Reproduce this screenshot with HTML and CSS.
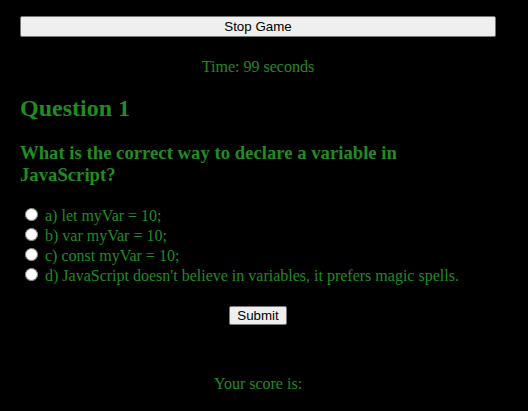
FILE: index.html
```html
<!DOCTYPE html>
<html>
<head>
<meta charset="utf-8">
<link rel="stylesheet" href="styles.css">
</head>
<body>
<div class="game">
  <button class="stop-btn">Stop Game</button>
  <p class="timer">Time: 99 seconds</p>
  <h2 class="q-num">Question 1</h2>
  <h3 class="q-text">What is the correct way to declare a variable in JavaScript?</h3>
  <div class="options">
    <label class="option"><input type="radio" name="ans"> a) let myVar = 10;</label>
    <label class="option"><input type="radio" name="ans"> b) var myVar = 10;</label>
    <label class="option"><input type="radio" name="ans"> c) const myVar = 10;</label>
    <label class="option"><input type="radio" name="ans"> d) JavaScript doesn't believe in variables, it prefers magic spells.</label>
  </div>
  <div class="submit-row"><button class="submit-btn">Submit</button></div>
  <p class="score">Your score is:</p>
</div>
</body>
</html>
```
FILE: styles.css
```css
html, body {
  background: #000;
}
body {
  margin: 0;
  padding: 16px 20px;
  font-family: "Liberation Serif", serif;
  color: #228b22;
}
.game {
  width: 476px;
}
.stop-btn {
  display: block;
  width: 476px;
  height: 21px;
  font-family: "Liberation Sans", Arial, sans-serif;
  font-size: 13.33px;
  background: #efefef;
  border: 1px solid #767676;
  border-radius: 2px;
  color: #000;
  padding: 1px 6px;
}
.timer {
  text-align: center;
  font-size: 16px;
  margin: 21px 0 19px;
}
.q-num {
  font-size: 24px;
  margin: 19px 0 20px;
}
.q-text {
  font-size: 18.72px;
  margin: 18.72px 0;
}
.options {
  display: flex;
  flex-direction: column;
}
.option {
  display: block;
  height: 20px;
  font-size: 16px;
  line-height: 20px;
}
.option input {
  margin: 3px 3px 0 5px;
}
.submit-row {
  text-align: center;
  margin-top: 21px;
}
.submit-btn {
  font-family: "Liberation Sans", Arial, sans-serif;
  font-size: 13.33px;
  background: #efefef;
  border: 1px solid #767676;
  border-radius: 2px;
  color: #000;
  padding: 1px 7px;
}
.score {
  text-align: center;
  font-size: 16px;
  margin-top: 50px;
}
```
